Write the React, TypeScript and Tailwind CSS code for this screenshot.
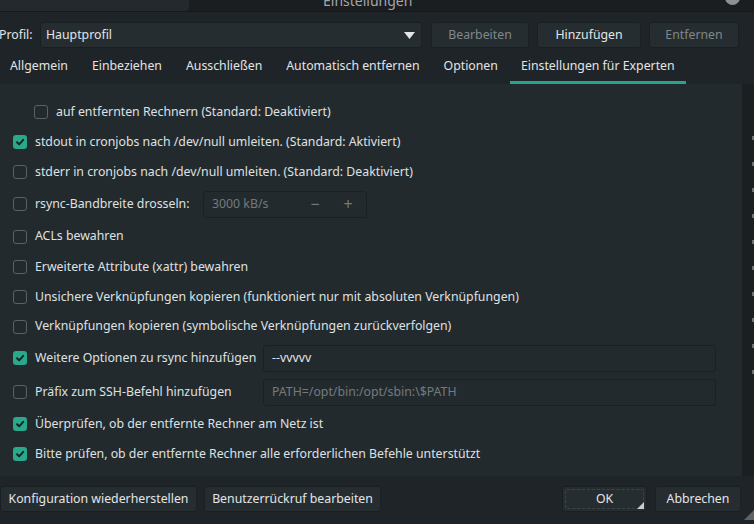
import React from "react";

const FONT = { fontFamily: '"Noto Sans", "Open Sans", sans-serif' };

function Check({ checked }: { checked?: boolean }) {
  if (checked) {
    return (
      <div className="w-[14px] h-[14px] rounded-[3px] bg-[#2aa88c] flex items-center justify-center shrink-0">
        <svg width="10" height="10" viewBox="0 0 10 10">
          <path d="M2 5.2 L4.2 7.3 L8.2 2.8" fill="none" stroke="#16231f" strokeWidth="1.9" strokeLinecap="round" strokeLinejoin="round" />
        </svg>
      </div>
    );
  }
  return <div className="w-[14px] h-[14px] rounded-[3px] border border-[#596266] shrink-0" />;
}

function Row({ h, checked, label, indent }: { h: string; checked?: boolean; label: string; indent?: boolean }) {
  return (
    <div className={`flex items-center ${h} ${indent ? "pl-[21px]" : ""}`}>
      <Check checked={checked} />
      <span className="ml-[8px] text-[12.3px] text-[#dfe1e2] whitespace-nowrap">{label}</span>
    </div>
  );
}

function Btn({ children, w, disabled, ok }: { children: React.ReactNode; w: string; disabled?: boolean; ok?: boolean }) {
  return (
    <div className={`relative ${w} h-[26px] rounded-[3px] bg-[#262d31] border border-[#1a1f22] flex items-center justify-center text-[12.3px] whitespace-nowrap ${disabled ? "text-[#80878a]" : "text-[#e3e5e6]"}`}>
      {ok && <div className="absolute inset-[2px] border border-dashed border-[#3c4448] rounded-[2px]" />}
      <span className="relative">{children}</span>
      {ok && (
        <svg className="absolute right-[2px] bottom-[2px]" width="7" height="7" viewBox="0 0 7 7">
          <path d="M7 0 L7 7 L0 7 Z" fill="#c8cbcc" />
        </svg>
      )}
    </div>
  );
}

export default function App() {
  const tabs = ["Allgemein", "Einbeziehen", "Ausschließen", "Automatisch entfernen", "Optionen", "Einstellungen für Experten"];
  return (
    <div className="w-[754px] h-[524px] overflow-hidden bg-[#1e2427] flex flex-col" style={FONT}>
      {/* title strip */}
      <div className="h-[12px] flex shrink-0 overflow-hidden bg-[#1a1e20] border-b border-[#15191b]">
        <div className="w-[189px] h-full bg-[#23292c] rounded-br-[4px]" />
        <div className="flex-1 pl-[134px]">
          <div className="mt-[-8px] text-[14px] text-[#a3a7a9] leading-[18px]">Einstellungen</div>
        </div>
        <div className="w-[15px] h-[15px] rounded-full bg-[#8c9092] mt-[-10px] mr-[14px]" />
      </div>

      {/* profile row */}
      <div className="flex items-center h-[26px] mt-[10px] shrink-0">
        <span className="ml-[-1px] text-[12.3px] text-[#e3e5e6] w-[41px]">Profil:</span>
        <div className="w-[382px] h-[26px] rounded-[3px] bg-[#262d31] border border-[#1a1f22] flex items-center justify-between pl-[5px] pr-[6px]">
          <span className="text-[12.3px] text-[#e3e5e6]">Hauptprofil</span>
          <svg width="11" height="7" viewBox="0 0 11 7">
            <path d="M0 0 L11 0 L5.5 7 Z" fill="#e3e5e6" />
          </svg>
        </div>
        <div className="ml-[9px] flex gap-[8px]">
          <Btn w="w-[98px]" disabled>Bearbeiten</Btn>
          <Btn w="w-[104px]">Hinzufügen</Btn>
          <Btn w="w-[90px]" disabled>Entfernen</Btn>
        </div>
      </div>

      {/* tabs */}
      <div className="flex h-[32px] mt-[4px] shrink-0 ml-[-2px]">
        {tabs.map((t, i) => (
          <div
            key={t}
            className={`flex items-center text-[12.3px] text-[#e3e5e6] border-b-[3px] whitespace-nowrap ${i === 5 ? "border-[#26a58a] px-[11px]" : "border-transparent px-[12px]"}`}
          >
            {t}
          </div>
        ))}
      </div>

      {/* content */}
      <div className="flex shrink-0 h-[392px]">
        <div className="w-[742px] h-full bg-[#232a2e] pl-[13px] pt-[13px] flex flex-col">
          <Row h="h-[30px]" indent label="auf entfernten Rechnern (Standard: Deaktiviert)" />
          <Row h="h-[30px]" checked label="stdout in cronjobs nach /dev/null umleiten. (Standard: Aktiviert)" />
          <Row h="h-[30px]" label="stderr in cronjobs nach /dev/null umleiten. (Standard: Deaktiviert)" />
          <div className="flex items-center h-[34px]">
            <Check />
            <span className="ml-[8px] text-[12.3px] text-[#dfe1e2] w-[168px] whitespace-nowrap">rsync-Bandbreite drosseln:</span>
            <div className="w-[164px] h-[27px] rounded-[3px] border border-[#1b2023] bg-[#232a2e] flex items-center pl-[8px] text-[12.3px] text-[#737a7e]">
              <span className="w-[93px]">3000 kB/s</span>
              <span className="w-[20px] text-center text-[16px] leading-none">−</span>
              <span className="w-[20px] ml-[13px] text-center text-[16px] leading-none">+</span>
            </div>
          </div>
          <Row h="h-[31px]" label="ACLs bewahren" />
          <Row h="h-[30px]" label="Erweiterte Attribute (xattr) bewahren" />
          <Row h="h-[30px]" label="Unsichere Verknüpfungen kopieren (funktioniert nur mit absoluten Verknüpfungen)" />
          <Row h="h-[29px]" label="Verknüpfungen kopieren (symbolische Verknüpfungen zurückverfolgen)" />
          <div className="flex items-center h-[34px]">
            <Check checked />
            <span className="ml-[8px] text-[12.3px] text-[#dfe1e2] w-[228px] whitespace-nowrap">Weitere Optionen zu rsync hinzufügen</span>
            <div className="w-[453px] h-[27px] rounded-[3px] border border-[#1b2023] bg-[#232a2e] flex items-center pl-[8px] text-[12.3px] text-[#e3e5e6]">--vvvvv</div>
          </div>
          <div className="flex items-center h-[34px]">
            <Check />
            <span className="ml-[8px] text-[12.3px] text-[#dfe1e2] w-[228px] whitespace-nowrap">Präfix zum SSH-Befehl hinzufügen</span>
            <div className="w-[453px] h-[27px] rounded-[3px] border border-[#1b2023] bg-[#232a2e] flex items-center pl-[8px] text-[12.3px] text-[#737a7e]">PATH=/opt/bin:/opt/sbin:\$PATH</div>
          </div>
          <Row h="h-[30px]" checked label="Überprüfen, ob der entfernte Rechner am Netz ist" />
          <Row h="h-[30px]" checked label="Bitte prüfen, ob der entfernte Rechner alle erforderlichen Befehle unterstützt" />
        </div>
        <div className="flex-1 bg-[#1a1f21] flex flex-col gap-[22px] pt-[52px] items-end">
          {Array.from({ length: 10 }).map((_, i) => (
            <div key={i} className="w-[2px] h-[4px] bg-[#6a7073]" />
          ))}
        </div>
      </div>

      {/* bottom buttons */}
      <div className="flex items-center h-[26px] mt-[10px] shrink-0">
        <Btn w="w-[197px]">Konfiguration wiederherstellen</Btn>
        <div className="ml-[7px]">
          <Btn w="w-[177px]">Benutzerrückruf bearbeiten</Btn>
        </div>
        <div className="ml-[181px]">
          <Btn w="w-[85px]" ok>OK</Btn>
        </div>
        <div className="ml-[8px]">
          <Btn w="w-[86px]">Abbrechen</Btn>
        </div>
      </div>
      <div className="flex justify-end mt-[-2px]">
        <svg width="10" height="10" viewBox="0 0 10 10">
          <path d="M10 0 L10 10 L0 10 Z" fill="#5d6467" />
        </svg>
      </div>
    </div>
  );
}
